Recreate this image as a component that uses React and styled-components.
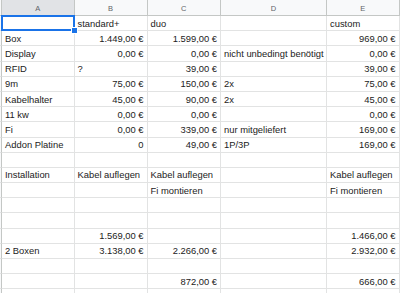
import React from 'react'
import styled, { createGlobalStyle } from 'styled-components'

const GlobalStyle = createGlobalStyle`
  html, body {
    margin: 0;
    padding: 0;
    background: #ffffff;
  }
  body {
    font-family: "Liberation Sans", Arial, sans-serif;
  }
`

export const Sheet = styled.div`
  display: grid;
  grid-template-columns: 2px 72.5px 73px 73.5px 106px 72.5px 40px;
  grid-template-rows: 16px;
  grid-auto-rows: 15.2px;
  width: 400px;
  height: 293px;
  overflow: hidden;
  background: #ffffff;
`

export const ColHead = styled.div`
  display: flex;
  align-items: center;
  justify-content: center;
  box-sizing: border-box;
  background: ${p => (p.$active ? '#e1e3e6' : '#f8f9fa')};
  border-right: 1px solid #c4c7c5;
  border-bottom: 1px solid #c4c7c5;
  color: #5f6368;
  font-size: 7.5px;
  padding-top: 1px;
`

export const RowHead = styled.div`
  box-sizing: border-box;
  background: #f8f9fa;
  border-right: 1px solid #c4c7c5;
  border-bottom: 1px solid #e2e3e3;
`

export const Cell = styled.div`
  position: relative;
  display: flex;
  align-items: center;
  justify-content: ${p => (p.$right ? 'flex-end' : 'flex-start')};
  box-sizing: border-box;
  padding: 0 3px 0 3px;
  border-right: 1px solid #e2e3e3;
  border-bottom: 1px solid #e2e3e3;
  font-size: 9.4px;
  color: #222222;
  white-space: nowrap;
  overflow: visible;
`

export const Selection = styled.div`
  position: absolute;
  z-index: 2;
  left: -1px;
  top: -1px;
  right: -1px;
  bottom: -1px;
  border: 2px solid #1a73e8;
  pointer-events: none;

  &::after {
    content: '';
    position: absolute;
    right: -5px;
    bottom: -5px;
    width: 5px;
    height: 5px;
    background: #1a73e8;
    border: 1px solid #ffffff;
  }
`

const rows = [
  ['', 'standard+', 'duo', '', 'custom'],
  ['Box', '1.449,00 €', '1.599,00 €', '', '969,00 €'],
  ['Display', '0,00 €', '0,00 €', 'nicht unbedingt benötigt', '0,00 €'],
  ['RFID', '?', '39,00 €', '', '39,00 €'],
  ['9m', '75,00 €', '150,00 €', '2x', '75,00 €'],
  ['Kabelhalter', '45,00 €', '90,00 €', '2x', '45,00 €'],
  ['11 kw', '0,00 €', '0,00 €', '', '0,00 €'],
  ['Fi', '0,00 €', '339,00 €', 'nur mitgeliefert', '169,00 €'],
  ['Addon Platine', '0', '49,00 €', '1P/3P', '169,00 €'],
  ['', '', '', '', ''],
  ['Installation', 'Kabel auflegen', 'Kabel auflegen', '', 'Kabel auflegen'],
  ['', '', 'Fi montieren', '', 'Fi montieren'],
  ['', '', '', '', ''],
  ['', '', '', '', ''],
  ['', '1.569,00 €', '', '', '1.466,00 €'],
  ['2 Boxen', '3.138,00 €', '2.266,00 €', '', '2.932,00 €'],
  ['', '', '', '', ''],
  ['', '', '872,00 €', '', '666,00 €'],
  ['', '', '', '', ''],
]

// numbers sit on the right, like the sheet does
const isNumber = v => /^[\d.,]+( €)?$/.test(v)

export default function App () {
  return (
    <>
      <GlobalStyle />
      <Sheet>
        <ColHead />
        {['A', 'B', 'C', 'D', 'E', ''].map((l, i) => (
          <ColHead key={i} $active={l === 'A'}>{l}</ColHead>
        ))}
        {rows.map((row, r) => (
          <React.Fragment key={r}>
            <RowHead />
            {row.map((v, c) => (
              <Cell key={c} $right={isNumber(v)}>
                {v}
                {r === 0 && c === 0 && <Selection />}
              </Cell>
            ))}
            <Cell />
          </React.Fragment>
        ))}
      </Sheet>
    </>
  )
}
